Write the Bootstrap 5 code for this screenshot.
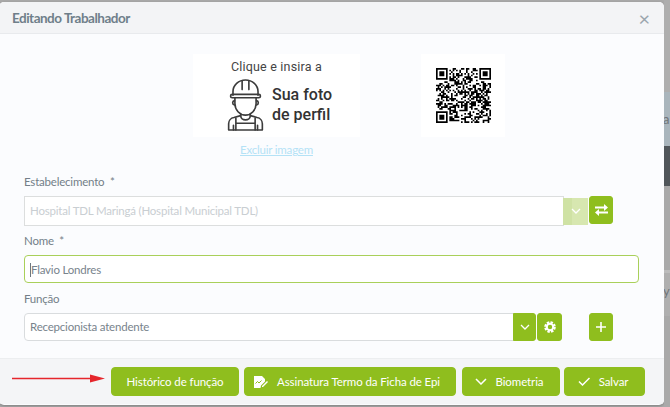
<!DOCTYPE html>
<html lang="pt">
<head>
<meta charset="utf-8">
<title>Editando Trabalhador</title>
<link href="https://cdn.jsdelivr.net/npm/bootstrap@5.3.0/dist/css/bootstrap.min.css" rel="stylesheet">
<style>
html,body{height:407px;overflow:hidden}
body{background:#aaa;font-family:"Lato","Noto Sans",sans-serif;font-size:11.5px;letter-spacing:-.2px;color:#6f7b85}
.stage{height:407px}
.sheet{width:665px;height:403px;margin:1.5px 0 0 -1px;border-radius:5px;background:#fbfcfe;box-shadow:0 1px 3px rgba(0,0,0,.25);overflow:hidden;flex:none}
.sheet-head{height:32px;background:#f3f4f6;border-bottom:1px solid #e8eaed;padding:4px 13px 0}
.sheet-title{font-size:13.5px;font-weight:700;color:#6f7f8a;margin:0;line-height:1;letter-spacing:-.5px}
.shut{font-size:20px;line-height:1;color:#9aa5ad;margin-right:1px;background:none;border:0;padding:0 0 3px}
.sheet-body{height:324.5px;padding:20.5px 25px 0}
.pics{padding-left:169px;gap:61px}
.pic-col{width:167px}
.pic-box{height:83px;background:#fff}
.qr-box{width:84px;height:83px;background:#fff}
.pic-line{font-family:Roboto,sans-serif;font-size:12.5px;color:#444;line-height:1;padding-top:7px;letter-spacing:.2px}
.pic-big{font-family:Roboto,sans-serif;font-size:16px;font-weight:500;color:#333;line-height:20px;letter-spacing:0}
.pic-row{gap:8px;margin-top:5px;padding-left:34px}
.wipe{display:block;text-align:center;color:#b4e2f6;margin-top:5px;line-height:16px;font-size:11.5px}
.fld-label{display:block;line-height:16px;margin:0 0 5px;color:#737f88}
.fld-first{margin-top:16px;margin-bottom:6px}
.fld-next{margin-top:7px;margin-bottom:6px}
.fld-last{margin-top:8px;margin-bottom:6px}
.sel-off,.sel-on,.txt-on{height:28px;font-size:11.5px;padding:0 5px;background-image:none;color:#78838c;font-family:inherit;box-shadow:none;letter-spacing:-.2px}
.sel-off{border:1px solid #dcdede;border-width:1.5px 1px;border-radius:0;color:#c9ced2;height:30px;background-color:#fff;opacity:1}
.sel-off:disabled{background-color:#fff}
.wrap-off{width:564px;flex:none}
.wrap-on{width:512px;flex:none}
.pale-tip{width:25px;height:27px;margin:1.5px 0 0 -25px;z-index:5;background:linear-gradient(90deg,#cfe2a4 9px,#d7e7b0 9px);border-radius:3px 0 0 3px}
.sq{width:24px;height:28px;padding:0;background:#8fbe1e;border:1px solid #8fbe1e;border-radius:3px;flex:none;color:#fff;line-height:1}
.sq:hover{background:#8fbe1e;border-color:#8fbe1e}
.sq-a{margin-left:1px}
.sq-b{margin-left:1px;width:25px}
.sq-c{margin-left:27px}
.sq-join{width:23px;border-radius:0 3px 3px 0;height:28px;padding:0}
.sel-on{border:1px solid #d9dcde;border-radius:4px 0 0 4px;background-color:#fff}
.txt-on{width:615px;border:1px solid #a9d05a;border-radius:4px;background:#fff;padding-left:5px;padding-top:1px}
.caret{display:inline-block;width:1px;height:14px;background:#6c7780}
.sheet-foot{height:46px;background:#f4f5f7;border-top:1px solid #eceef0;padding:8px 0 0 13px}
.pointer{margin-right:6px;flex:none}
.go{height:29px;font-size:11.5px;padding:0;background:#8fbe1e;border:1px solid #8fbe1e;color:#fff;border-radius:4px;font-family:inherit;flex:none;gap:9px;letter-spacing:-.1px}
.go:hover{background:#8fbe1e;border-color:#8fbe1e;color:#fff}
.go-1{width:128px;margin-right:5px}
.go-2{width:212px;margin-right:6px;padding-right:6px}
.go-3{width:98px;margin-right:4px;padding-right:4px}
.go-4{width:81px;padding-right:3px}
.backdrop{flex:1;min-width:0;overflow:hidden;font-size:13px;color:#6f7478}
.bd-a{height:92px;background:#aeaeae}
.bd-b{height:54px;background:#a9b5bc;line-height:54px;margin-left:-1px}
.bd-c{height:40px;background:#50565a}
.bd-d{height:84px;background:#a9a9a9}
.bd-e{height:3px;background:#bcbcbc}
.bd-f{height:43px;background:#afafaf;line-height:36px;margin-left:-1px}
.bd-g{height:91px;background:#a9a9a9}
</style>
</head>
<body>
<div class="stage d-flex">
  <div class="sheet d-flex flex-column">
    <div class="sheet-head d-flex align-items-center justify-content-between">
      <h5 class="sheet-title">Editando Trabalhador</h5>
      <button type="button" class="shut" aria-label="Fechar">&times;</button>
    </div>
    <div class="sheet-body">
      <div class="pics d-flex align-items-start">
        <div class="pic-col">
          <div class="pic-box text-center">
            <div class="pic-line">Clique e insira a</div>
            <div class="pic-row d-flex align-items-center text-start">
              <svg width="37" height="52" viewBox="0 0 38 54" fill="none" stroke="#3c3c3c" stroke-width="1.7" stroke-linecap="round" stroke-linejoin="round">
                <path d="M6 17v-4a13 12 0 0 1 26 0v4"/>
                <path d="M15.500 2v9M22.500 2v9"/>
                <rect x="3.500" y="16" width="31" height="3.500" rx="1.700"/>
                <path d="M8 19.500v6a11 12 0 0 0 22 0v-6"/>
                <path d="M7.500 22.500a2.300 2.300 0 0 0 0 4.500M30.500 22.500a2.300 2.300 0 0 1 0 4.500"/>
                <path d="M14 36.500v1.500c0 6 10 6 10 0v-1.500"/>
                <path d="M14 38l-7 2a6.500 6.500 0 0 0-5.500 6.500v6.500h35v-6.500a6.500 6.500 0 0 0-5.500-6.500l-7-2"/>
                <path d="M9 40.500v12.500M29 40.500v12.500M9 46h20M6.500 53v-5M31.500 53v-5"/>
              </svg>
              <div class="pic-big">Sua foto<br>de perfil</div>
            </div>
          </div>
          <a class="wipe" href="#">Excluir imagem</a>
        </div>
        <div class="qr-box d-flex align-items-center justify-content-center">
          <svg id="qrcode" width="55" height="55" viewBox="0 0 33 33"></svg>
        </div>
      </div>

      <label class="fld-label fld-first">Estabelecimento &nbsp;*</label>
      <div class="d-flex align-items-start">
        <div class="input-group wrap-off">
          <select class="form-select sel-off" disabled><option>Hospital TDL Maringá (Hospital Municipal TDL)</option></select>
          <span class="pale-tip d-flex align-items-center justify-content-center">
            <svg width="10" height="6" viewBox="0 0 10 6" fill="none" stroke="#fff" stroke-width="1.300"><path d="M1 1l4 4 4-4"/></svg>
          </span>
        </div>
        <button type="button" class="btn sq sq-a d-flex align-items-center justify-content-center" aria-label="Trocar">
          <svg width="13" height="12" viewBox="0 0 13 12" fill="#fff"><path d="M0 2.500h9V0l4 3.500-4 3.500V4.500H0zM13 7.500H4V5L0 8.500 4 12V9.500h9z"/></svg>
        </button>
      </div>

      <label class="fld-label fld-next">Nome &nbsp;*</label>
      <div class="form-control txt-on d-flex align-items-center"><span class="caret"></span>Flavio Londres</div>

      <label class="fld-label fld-last">Função</label>
      <div class="d-flex align-items-start">
        <div class="input-group wrap-on">
          <select class="form-select sel-on"><option>Recepcionista atendente</option></select>
          <button type="button" class="btn sq sq-join d-flex align-items-center justify-content-center" aria-label="Abrir">
            <svg width="10" height="6" viewBox="0 0 10 6" fill="none" stroke="#fff" stroke-width="1.300"><path d="M1 1l4 4 4-4"/></svg>
          </button>
        </div>
        <button type="button" class="btn sq sq-b d-flex align-items-center justify-content-center" aria-label="Configurar">
          <svg width="12" height="12" viewBox="0 0 12 12"><circle cx="6" cy="6" r="4.600" fill="none" stroke="#fff" stroke-width="2.400" stroke-dasharray="2.400 1.200"/><circle cx="6" cy="6" r="3.200" fill="none" stroke="#fff" stroke-width="2"/></svg>
        </button>
        <button type="button" class="btn sq sq-c d-flex align-items-center justify-content-center" aria-label="Adicionar">
          <svg width="10" height="10" viewBox="0 0 10 10" stroke="#fff" stroke-width="1.600"><path d="M5 0v10M0 5h10"/></svg>
        </button>
      </div>
    </div>
    <div class="sheet-foot d-flex align-items-start">
      <svg class="pointer" width="93" height="29" viewBox="0 0 93 29"><path d="M0 11.500h78" stroke="#e5262c" stroke-width="1.500"/><path d="M78 7.500l15 4-15 4z" fill="#e5262c"/></svg>
      <button type="button" class="btn go go-1">Histórico de função</button>
      <button type="button" class="btn go go-2 d-flex align-items-center justify-content-center">
        <svg width="14" height="12" viewBox="0 0 14 12"><path d="M0 0h8l3 3v2.500L7 9.500 6.500 12H0z" fill="#fff"/><path d="M1.500 7.500l2-2 1.500 1.500 2.500-2.500" fill="none" stroke="#8fbe1e" stroke-width="1"/><path d="M8 10l5-5 1 1-5 5H8z" fill="#fff"/></svg>
        Assinatura Termo da Ficha de Epi
      </button>
      <button type="button" class="btn go go-3 d-flex align-items-center justify-content-center">
        <svg width="12" height="7" viewBox="0 0 12 7" fill="none" stroke="#fff" stroke-width="1.500"><path d="M1 1l5 5 5-5"/></svg>
        Biometria
      </button>
      <button type="button" class="btn go go-4 d-flex align-items-center justify-content-center">
        <svg width="12" height="9" viewBox="0 0 12 9" fill="none" stroke="#fff" stroke-width="1.500"><path d="M1 4.500l3.500 3.500 7-7"/></svg>
        Salvar
      </button>
    </div>
  </div>
  <div class="backdrop">
    <div class="bd-a"></div><div class="bd-b">a</div><div class="bd-c"></div><div class="bd-d"></div><div class="bd-e"></div><div class="bd-f">y</div><div class="bd-g"></div>
  </div>
</div>
<script>
(function(){
  var n=33,s=12345,d='';
  function r(){s=(s*1103515245+12345)&2147483647;return (s>>16)&1;}
  function finder(x,y){return x>=0&&y>=0&&x<7&&y<7?((x==0||y==0||x==6||y==6)||(x>=2&&x<=4&&y>=2&&y<=4)):null;}
  for(var y=0;y<n;y++)for(var x=0;x<n;x++){
    var v=null,a=[[x,y],[x-n+7,y],[x,y-n+7]];
    for(var i=0;i<3;i++){var f=finder(a[i][0],a[i][1]);if(f!==null)v=f;}
    if(v===null){
      var near=(x<8&&y<8)||(x>=n-8&&y<8)||(x<8&&y>=n-8);
      v=near?false:!!r();
    }
    if(v)d+='M'+x+' '+y+'h1v1h-1z';
  }
  document.getElementById('qrcode').innerHTML='<path d="'+d+'" fill="#000"/>';
})();
</script>
<script src="https://cdn.jsdelivr.net/npm/bootstrap@5.3.0/dist/js/bootstrap.bundle.min.js"></script>
</body>
</html>
